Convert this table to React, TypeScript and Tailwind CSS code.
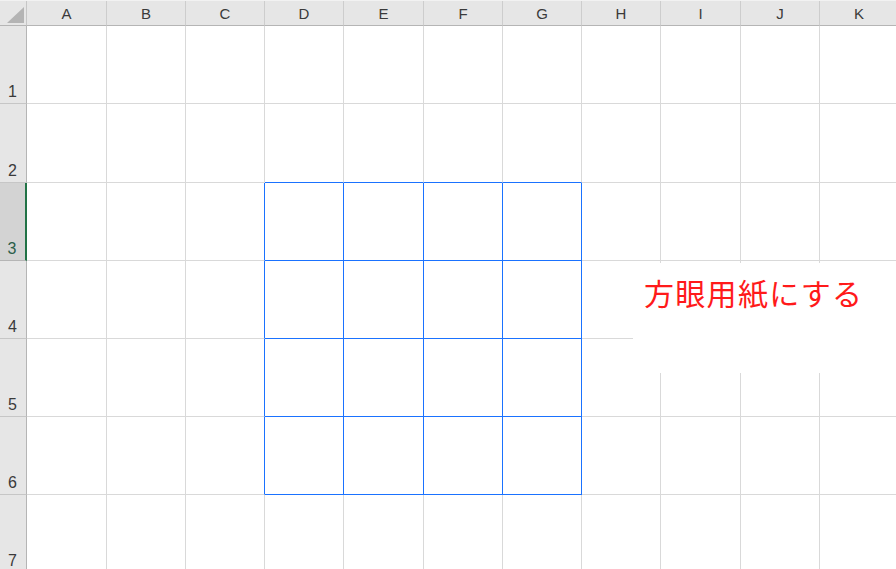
import React from "react";

const COLS = ["A", "B", "C", "D", "E", "F", "G", "H", "I", "J", "K"];
const COL_W = ["w-[80px]", "w-[79px]", "w-[79px]", "w-[79px]", "w-[80px]", "w-[79px]", "w-[79px]", "w-[79px]", "w-[80px]", "w-[79px]", "w-[79px]"];
const ROW_H = ["h-[78px]", "h-[79px]", "h-[78px]", "h-[78px]", "h-[78px]", "h-[78px]", "h-[78px]"];

function Cell({ r, c }: { r: number; c: number }) {
  const rightBlue = r >= 3 && r <= 6 && c >= 2 && c <= 6;
  const bottomBlue = c >= 3 && c <= 6 && r >= 2 && r <= 6;
  return (
    <div
      className={`${COL_W[c]} shrink-0 h-full border-r border-b bg-white ${
        rightBlue ? "border-r-[#1a72ff]" : "border-r-[#d9d9d9]"
      } ${bottomBlue ? "border-b-[#1a72ff]" : "border-b-[#d9d9d9]"}`}
    />
  );
}

export default function App() {
  return (
    <div
      className="relative w-[896px] h-[569px] overflow-hidden bg-white"
      style={{ fontFamily: '"Noto Sans CJK JP", "Liberation Sans", sans-serif' }}
    >
      {/* Column header */}
      <div className="flex h-[26px] bg-[#e6e6e6] border-t border-t-[#f2f2f2]">
        <div className="w-[27px] shrink-0 h-full border-r border-b border-r-[#c6c6c6] border-b-[#b5b5b5] flex items-end justify-end pr-[2px] pb-[2px]">
          <svg width="17" height="16" viewBox="0 0 17 16">
            <polygon points="0,16 17,16 17,0" fill="#b4b4b4" />
          </svg>
        </div>
        {COLS.map((c, i) => (
          <div
            key={c}
            className={`${COL_W[i]} shrink-0 h-full border-r border-b border-r-[#cdcdcd] border-b-[#b5b5b5] flex items-center justify-center text-[15px] leading-none text-[#3a3a3a]`}
            style={{ fontFamily: '"Liberation Sans", sans-serif' }}
          >
            {c}
          </div>
        ))}
      </div>

      {/* Rows */}
      {ROW_H.map((h, ri) => {
        const r = ri + 1;
        const selected = r === 3;
        return (
          <div key={r} className={`flex ${h}`}>
            <div
              className={`w-[27px] shrink-0 h-full border-b flex items-end justify-center pb-[3px] pr-[1px] text-[16px] leading-none ${
                selected
                  ? "bg-[#d3d3d3] border-r-2 border-r-[#217346] text-[#2b5e4a] border-b-[#b5b5b5]"
                  : "bg-[#e6e6e6] border-r border-r-[#b5b5b5] text-[#3a3a3a] border-b-[#c6c6c6]"
              }`}
              style={{ fontFamily: '"Liberation Sans", sans-serif' }}
            >
              {r}
            </div>
            {COLS.map((_, c) => (
              <Cell key={c} r={r} c={c} />
            ))}
          </div>
        );
      })}

      {/* Text box shape */}
      <div className="absolute left-[633px] top-[263px] w-[270px] h-[110px] bg-white">
        <div className="pl-[11px] pt-[14px] text-[30px] leading-none text-[#ff1a1a] tracking-[1.3px]">
          方眼用紙にする
        </div>
      </div>
    </div>
  );
}
